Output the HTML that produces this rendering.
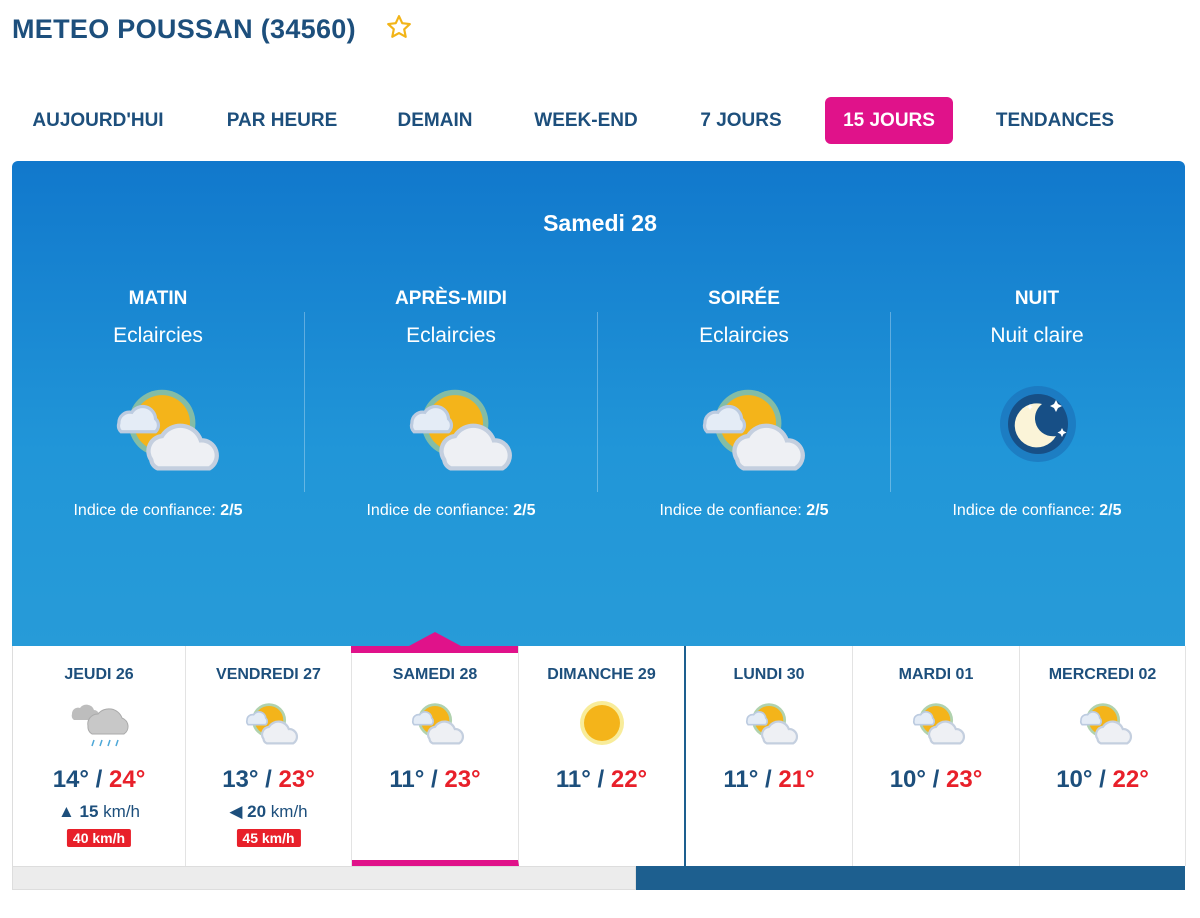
<!DOCTYPE html>
<html><head><meta charset="utf-8"><style>
*{margin:0;padding:0;box-sizing:border-box}
body{width:1200px;height:918px;background:#fff;font-family:"Liberation Sans",sans-serif;position:relative;overflow:hidden;color:#1d4f7c}
h1{position:absolute;left:12px;top:14px;font-size:27px;font-weight:bold;color:#1d4f7c;letter-spacing:.3px}
.star{position:absolute;left:386px;top:14px}
.tab{position:absolute;top:97px;height:47px;line-height:47px;font-size:19px;font-weight:bold;color:#1d4f7c;text-align:center}
.tab.on{background:#e0128a;color:#fff;border-radius:6px}
.panel{position:absolute;left:12px;top:161px;width:1173px;height:486px;background:linear-gradient(#1178cc,#2196d8 60%,#279bd8);border-radius:6px 6px 0 0}
.title{position:absolute;top:210px;width:1200px;text-align:center;color:#fff;font-size:23px;font-weight:bold}
.per{position:absolute;top:288px;width:290px;text-align:center;color:#fff}
.per b{display:block;font-size:19px}
.per span{display:block;font-size:21px;margin-top:14px}
.per i{position:absolute;top:214px;left:0;width:100%;font-style:normal;font-size:16px}
.per svg{position:absolute;left:84px;top:92px}
.vl{position:absolute;top:312px;width:1px;height:180px;background:rgba(255,255,255,.3)}
.days{position:absolute;left:12px;top:646px;width:1173px;height:220px;background:#fff;border-left:1px solid #ddd}
.d{position:absolute;top:0;height:220px;border-right:1px solid #e3e3e3;text-align:center}
.d .n{margin-top:20px;font-size:16px;font-weight:bold;color:#1d4f7c}
.d .t{position:absolute;top:120px;width:100%;font-size:24px;font-weight:bold;color:#1d4f7c}
.d .t em{font-style:normal;color:#e8202a}
.d .w{position:absolute;top:156px;width:100%;font-size:17px;color:#1d4f7c}
.d .g{position:absolute;top:183px;left:50%;transform:translateX(-50%);background:#e8202a;color:#fff;font-size:14px;font-weight:bold;padding:1px 6px;border-radius:2px}
.d svg{position:absolute;left:50%;top:52px;transform:translateX(-50%)}
</style></head><body>
<svg width="0" height="0" style="position:absolute"><defs>
<g id="sc">
<circle cx="60" cy="40" r="31" fill="#9cc79a" opacity=".8"/>
<circle cx="60" cy="40" r="26" fill="#f4b41a"/>
<path d="M20 40a10 10 0 0 1 12-10a12 12 0 0 1 22 6a8 8 0 0 1 0 12H22a8 8 0 0 1-2-8z" fill="#e4ecf6" stroke="#bccbe0" stroke-width="3"/>
<path d="M50 74a14 14 0 0 1 10-22a20 20 0 0 1 36 4a14 14 0 0 1 8 26H56a10 10 0 0 1-6-8z" fill="#eef0f4" stroke="#c4cfdf" stroke-width="4"/>
</g></defs></svg>
<h1>METEO POUSSAN (34560)</h1>
<svg class="star" width="26" height="26" viewBox="0 0 24 24"><path d="M12 2l3 6.5 7 .8-5.2 4.8 1.4 7L12 17.6 5.8 21l1.4-7L2 9.3l7-.8z" fill="none" stroke="#f2b418" stroke-width="2" stroke-linejoin="round"/></svg>
<div class="tab" style="left:14px;width:168px">AUJOURD'HUI</div>
<div class="tab" style="left:212px;width:140px">PAR HEURE</div>
<div class="tab" style="left:385px;width:100px">DEMAIN</div>
<div class="tab" style="left:520px;width:132px">WEEK-END</div>
<div class="tab" style="left:685px;width:112px">7 JOURS</div>
<div class="tab on" style="left:825px;width:128px">15 JOURS</div>
<div class="tab" style="left:982px;width:146px">TENDANCES</div>
<div class="panel"></div>
<div class="title">Samedi 28</div>
<div class="per" style="left:13px"><b>MATIN</b><span>Eclaircies</span><svg width="130" height="97" viewBox="0 0 120 90"><use href="#sc"/></svg><i>Indice de confiance: <b style="display:inline;font-size:16px">2/5</b></i></div>
<div class="per" style="left:306px"><b>APRÈS-MIDI</b><span>Eclaircies</span><svg width="130" height="97" viewBox="0 0 120 90"><use href="#sc"/></svg><i>Indice de confiance: <b style="display:inline;font-size:16px">2/5</b></i></div>
<div class="per" style="left:599px"><b>SOIRÉE</b><span>Eclaircies</span><svg width="130" height="97" viewBox="0 0 120 90"><use href="#sc"/></svg><i>Indice de confiance: <b style="display:inline;font-size:16px">2/5</b></i></div>
<div class="per" style="left:892px"><b>NUIT</b><span>Nuit claire</span>
<svg width="120" height="90" viewBox="0 0 120 90" style="left:88px"><circle cx="58" cy="44" r="38" fill="#1b6eb5" opacity=".6"/><circle cx="58" cy="44" r="30" fill="#174f86"/><path d="M62 24a22 22 0 1 0 14 32a18 18 0 0 1-14-32z" fill="#fbf4d8"/><path d="M76 20l2 4 4 2-4 2-2 4-2-4-4-2 4-2zM82 48l1.5 3 3 1.5-3 1.5-1.5 3-1.5-3-3-1.5 3-1.5zM50 24l1 2 2 1-2 1-1 2-1-2-2-1 2-1z" fill="#fff"/></svg>
<i>Indice de confiance: <b style="display:inline;font-size:16px">2/5</b></i></div>
<div class="vl" style="left:304px"></div><div class="vl" style="left:597px"></div><div class="vl" style="left:890px"></div>
<div class="days">
<div class="d" style="left:0;width:173px"><div class="n">JEUDI 26</div>
<svg width="70" height="54" viewBox="0 0 70 54"><path d="M8 16a6 6 0 0 1 8-6a8 8 0 0 1 14 2a5 5 0 0 1 0 10H10a5 5 0 0 1-2-6z" fill="#bdbdbd"/><path d="M24 28a10 10 0 0 1 10-12a14 14 0 0 1 24 4a9 9 0 0 1 2 16H28a8 8 0 0 1-4-8z" fill="#c8c8c8" stroke="#aaa" stroke-width="1"/><path d="M30 42l-2 6M38 42l-2 6M46 42l-2 6M54 42l-2 6" stroke="#4da8d8" stroke-width="1.5"/></svg>
<div class="t">14° / <em>24°</em></div><div class="w">▲ <b>15</b> km/h</div><div class="g">40 km/h</div></div>
<div class="d" style="left:173px;width:166px"><div class="n">VENDREDI 27</div><svg width="66" height="50" viewBox="0 0 120 90"><use href="#sc"/></svg>
<div class="t">13° / <em>23°</em></div><div class="w">◀ <b>20</b> km/h</div><div class="g">45 km/h</div></div>
<div class="d" style="left:339px;width:167px;border-bottom:6px solid #e0128a"><div class="n">SAMEDI 28</div><svg width="66" height="50" viewBox="0 0 120 90"><use href="#sc"/></svg><div class="t">11° / <em>23°</em></div></div>
<div class="d" style="left:506px;width:167px;border-right:2px solid #1d5f8f"><div class="n">DIMANCHE 29</div><svg width="50" height="50" viewBox="0 0 50 50"><circle cx="25" cy="25" r="22" fill="#f8ec9a"/><circle cx="25" cy="25" r="18" fill="#f4b41a"/></svg><div class="t">11° / <em>22°</em></div></div>
<div class="d" style="left:673px;width:167px"><div class="n">LUNDI 30</div><svg width="66" height="50" viewBox="0 0 120 90"><use href="#sc"/></svg><div class="t">11° / <em>21°</em></div></div>
<div class="d" style="left:840px;width:167px"><div class="n">MARDI 01</div><svg width="66" height="50" viewBox="0 0 120 90"><use href="#sc"/></svg><div class="t">10° / <em>23°</em></div></div>
<div class="d" style="left:1007px;width:166px"><div class="n">MERCREDI 02</div><svg width="66" height="50" viewBox="0 0 120 90"><use href="#sc"/></svg><div class="t">10° / <em>22°</em></div></div>
</div>
<svg style="position:absolute;left:351px;top:632px;z-index:5" width="167" height="21"><path d="M0 21V14H58L84 0L110 14H167V21z" fill="#e0128a"/></svg>
<div style="position:absolute;left:12px;top:866px;width:624px;height:24px;background:#ececec;border:1px solid #ddd"></div>
<div style="position:absolute;left:636px;top:866px;width:549px;height:24px;background:#1d5f8f"></div>
</body></html>
